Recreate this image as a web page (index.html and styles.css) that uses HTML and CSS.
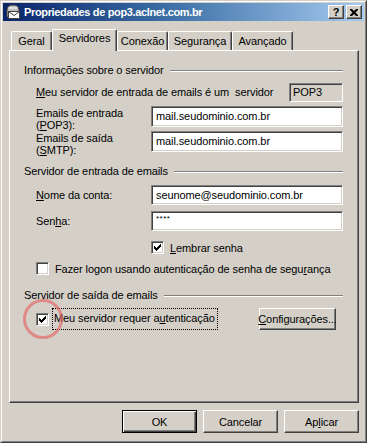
FILE: index.html
```html
<!DOCTYPE html>
<html>
  <head>
    <title>Propriedades de pop3.aclnet.com.br</title>
    <link rel="stylesheet" href="styles.css">
  </head>
  <body>
    <div class="window">
      <div class="frame">
        <div class="titlebar">
          <svg class="app-icon" width="16" height="16" viewBox="0 0 16 16">
            <path d="M2 6 Q2 1 8 1 Q14 1 14 6 L14 13 L2 13 Z" fill="#c0c0c0" stroke="#404040" stroke-width="1"/>
            <path d="M4 4 L12 4" stroke="#ffffff" stroke-width="1"/>
            <rect x="3.5" y="7.5" width="11" height="7" fill="#ffffff" stroke="#404040" stroke-width="1"/>
            <path d="M3.5 7.5 L9 11.5 L14.5 7.5" fill="none" stroke="#404040" stroke-width="1"/>
          </svg>
          <span class="title">Propriedades de pop3.aclnet.com.br</span>
          <div class="caption-buttons">
            <span class="cap-btn help">?</span>
            <span class="cap-btn close">
              <svg width="8" height="7" viewBox="0 0 8 7">
                <path d="M0 0h2l2 2 2-2h2v1l-2.5 2.5 2.5 2.5v1h-2l-2-2-2 2h-2v-1l2.5-2.5-2.5-2.5z" fill="#000"/>
              </svg>
            </span>
          </div>
        </div>

        <div class="content">
          <div class="tabs">
            <div class="tab tab-geral">Geral</div>
            <div class="tab tab-servidores selected">Servidores</div>
            <div class="tab tab-conexao">Conexão</div>
            <div class="tab tab-seguranca">Segurança</div>
            <div class="tab tab-avancado">Avançado</div>
          </div>

          <div class="panel">
            <div class="group-title first">
              <span>Informações sobre o servidor</span>
              <span class="etched"></span>
            </div>

            <div class="row row-type">
              <span class="label-long"><u>M</u>eu servidor de entrada de emails é um &nbsp;servidor</span>
              <span class="readonly">POP3</span>
            </div>

            <div class="row row-two">
              <span class="label">Emails de entrada<br>(<u>P</u>OP3):</span>
              <span class="field">mail.seudominio.com.br</span>
            </div>

            <div class="row row-two">
              <span class="label">Emails de saída<br>(<u>S</u>MTP):</span>
              <span class="field">mail.seudominio.com.br</span>
            </div>

            <div class="group-title second">
              <span>Servidor de entrada de emails</span>
              <span class="etched"></span>
            </div>

            <div class="row row-account">
              <span class="label"><u>N</u>ome da conta:</span>
              <span class="field">seunome@seudominio.com.br</span>
            </div>

            <div class="row row-pass">
              <span class="label">Sen<u>h</u>a:</span>
              <span class="field password">****</span>
            </div>

            <div class="check-row remember">
              <span class="checkbox checked"></span>
              <span><u>L</u>embrar senha</span>
            </div>

            <div class="check-row logon">
              <span class="checkbox"></span>
              <span>Fazer logon usando autenticação de senha de segu<u>r</u>ança</span>
            </div>

            <div class="group-title third">
              <span>Servidor de saída de emails</span>
              <span class="etched"></span>
            </div>

            <div class="check-row auth">
              <span class="checkbox checked"></span>
              <span class="focus">Meu servidor requer a<u>u</u>tenticação</span>
              <span class="button settings"><u>C</u>onfigurações...</span>
            </div>

            <span class="marker"></span>
          </div>

          <div class="actions">
            <span class="button default">OK</span>
            <span class="button">Cancelar</span>
            <span class="button">Ap<u>l</u>icar</span>
          </div>
        </div>
      </div>
    </div>
  </body>
</html>
```

FILE: styles.css
```css
body {
  margin: 0;
  background: #d4d0c8;
  font-family: "Liberation Sans", Arial, sans-serif;
  font-size: 11px;
  letter-spacing: -0.1px;
  color: #000;
}

u {
  text-decoration-thickness: 1px;
  text-underline-offset: 1px;
}

.window {
  width: 367px;
  height: 443px;
  box-sizing: border-box;
  border: 1px solid;
  border-color: #d4d0c8 #404040 #404040 #d4d0c8;
}

.frame {
  height: 100%;
  box-sizing: border-box;
  border: 1px solid;
  border-color: #ffffff #808080 #808080 #ffffff;
  padding: 1px;
}

.titlebar {
  height: 18px;
  display: flex;
  align-items: center;
  background: linear-gradient(90deg, #0a246a 0%, #3a6ea5 45%, #a6caf0 100%);
  color: #fff;
}

.app-icon {
  margin-left: 2px;
  margin-right: 3px;
}

.title {
  font-weight: bold;
  font-size: 11px;
  letter-spacing: -0.35px;
}

.caption-buttons {
  margin-left: auto;
  margin-right: 2px;
  display: flex;
  gap: 2px;
}

.cap-btn {
  width: 16px;
  height: 14px;
  box-sizing: border-box;
  background: #d4d0c8;
  border: 1px solid;
  border-color: #ffffff #404040 #404040 #ffffff;
  box-shadow: inset -1px -1px #808080;
  display: flex;
  align-items: center;
  justify-content: center;
  color: #000;
  font-weight: bold;
  font-size: 11px;
}

.content {
  padding: 8px 5px 0 6px;
}

.tabs {
  display: flex;
  align-items: flex-end;
  height: 21px;
  padding-left: 2px;
  position: relative;
  z-index: 1;
}

.tab {
  height: 19px;
  box-sizing: border-box;
  border-top: 1px solid #fff;
  border-left: 1px solid #fff;
  border-right: 1px solid #404040;
  box-shadow: inset -1px 0 #808080;
  border-radius: 2px 2px 0 0;
  padding-top: 3px;
  text-align: center;
  background: #d4d0c8;
}

.tab-geral { width: 41px; }
.tab-servidores { width: 65px; }
.tab-conexao { width: 51px; }
.tab-seguranca { width: 64px; }
.tab-avancado { width: 61px; }

.tab.selected {
  height: 22px;
  margin-bottom: -1px;
  padding-top: 2px;
}

.panel {
  height: 353px;
  box-sizing: border-box;
  border: 1px solid;
  border-color: #ffffff #404040 #404040 #ffffff;
  box-shadow: inset -1px -1px #808080;
  padding: 0 15px 0 14px;
  position: relative;
}

.group-title {
  display: flex;
  align-items: center;
  height: 13px;
  line-height: 13px;
}

.group-title.first { margin-top: 13px; }
.group-title.second { margin-top: 13px; }
.group-title.third { margin-top: 14px; }

.etched {
  flex: 1;
  height: 0;
  border-top: 1px solid #808080;
  border-bottom: 1px solid #fff;
  margin-left: 6px;
}

.row {
  display: flex;
  align-items: flex-start;
  padding-left: 12px;
}

.label {
  width: 115px;
  line-height: 12px;
}

.label-long {
  flex: 1;
  line-height: 19px;
}

.row-type { margin-top: 6px; }
.row-two { margin-top: 4px; height: 21px; }
.row-two .label { margin-top: 1px; }
.row-account { margin-top: 7px; }
.row-pass { margin-top: 6px; }
.row-account .label,
.row-pass .label { line-height: 20px; }

.field,
.readonly {
  flex: 1;
  height: 20px;
  box-sizing: border-box;
  border: 1px solid;
  border-color: #808080 #ffffff #ffffff #808080;
  box-shadow: inset 1px 1px #404040, inset -1px -1px #d4d0c8;
  background: #fff;
  padding: 0 4px;
  line-height: 18px;
  white-space: nowrap;
}

.row-two .field { height: 21px; line-height: 19px; }

.readonly {
  flex: none;
  width: 54px;
  height: 19px;
  line-height: 17px;
  background: #d4d0c8;
  padding-left: 3px;
}

.password {
  font-size: 8px;
  letter-spacing: 0.5px;
  line-height: 13px;
}

.check-row {
  display: flex;
  align-items: center;
  height: 13px;
}

.check-row .checkbox { margin-right: 6px; }

.remember { margin-top: 10px; padding-left: 127px; }
.logon { margin-top: 8px; padding-left: 12px; }
.auth { margin-top: 6px; padding-left: 12px; height: 22px; }

.checkbox {
  width: 13px;
  height: 13px;
  box-sizing: border-box;
  border: 1px solid;
  border-color: #808080 #ffffff #ffffff #808080;
  box-shadow: inset 1px 1px #404040, inset -1px -1px #d4d0c8;
  background: #fff no-repeat center;
}

.checkbox.checked {
  background-image: url("data:image/svg+xml;utf8,<svg xmlns='http://www.w3.org/2000/svg' width='7' height='7' viewBox='0 0 7 7' shape-rendering='crispEdges'><path d='M0 2h1v1h1v1h1v-1h1v-1h1v-1h1v-1h1v3h-1v1h-1v1h-1v1h-1v1h-1v-1h-1v-1h-1v-1h-1z' fill='black'/></svg>");
}

.auth .checkbox { margin-right: 4px; }

.focus {
  outline: 1px dotted #000;
  outline-offset: 0;
  padding: 3px 2px 4px 1px;
  line-height: 13px;
}

.button {
  width: 75px;
  height: 23px;
  box-sizing: border-box;
  border: 1px solid;
  border-color: #ffffff #404040 #404040 #ffffff;
  box-shadow: inset -1px -1px #808080;
  background: #d4d0c8;
  display: flex;
  align-items: center;
  justify-content: center;
}

.settings {
  width: 77px;
  height: 22px;
  margin-left: auto;
  margin-right: 7px;
}

.actions {
  display: flex;
  justify-content: flex-end;
  gap: 6px;
  margin-top: 7px;
}

.button.default {
  border: 1px solid #000;
  box-shadow: inset 1px 1px #fff, inset -1px -1px #404040, inset -2px -2px #808080;
}

.marker {
  position: absolute;
  left: 13px;
  top: 248px;
  width: 34px;
  height: 34px;
  border: 3px solid rgba(228, 100, 100, 0.65);
  border-radius: 50%;
  filter: blur(0.6px);
}
```
